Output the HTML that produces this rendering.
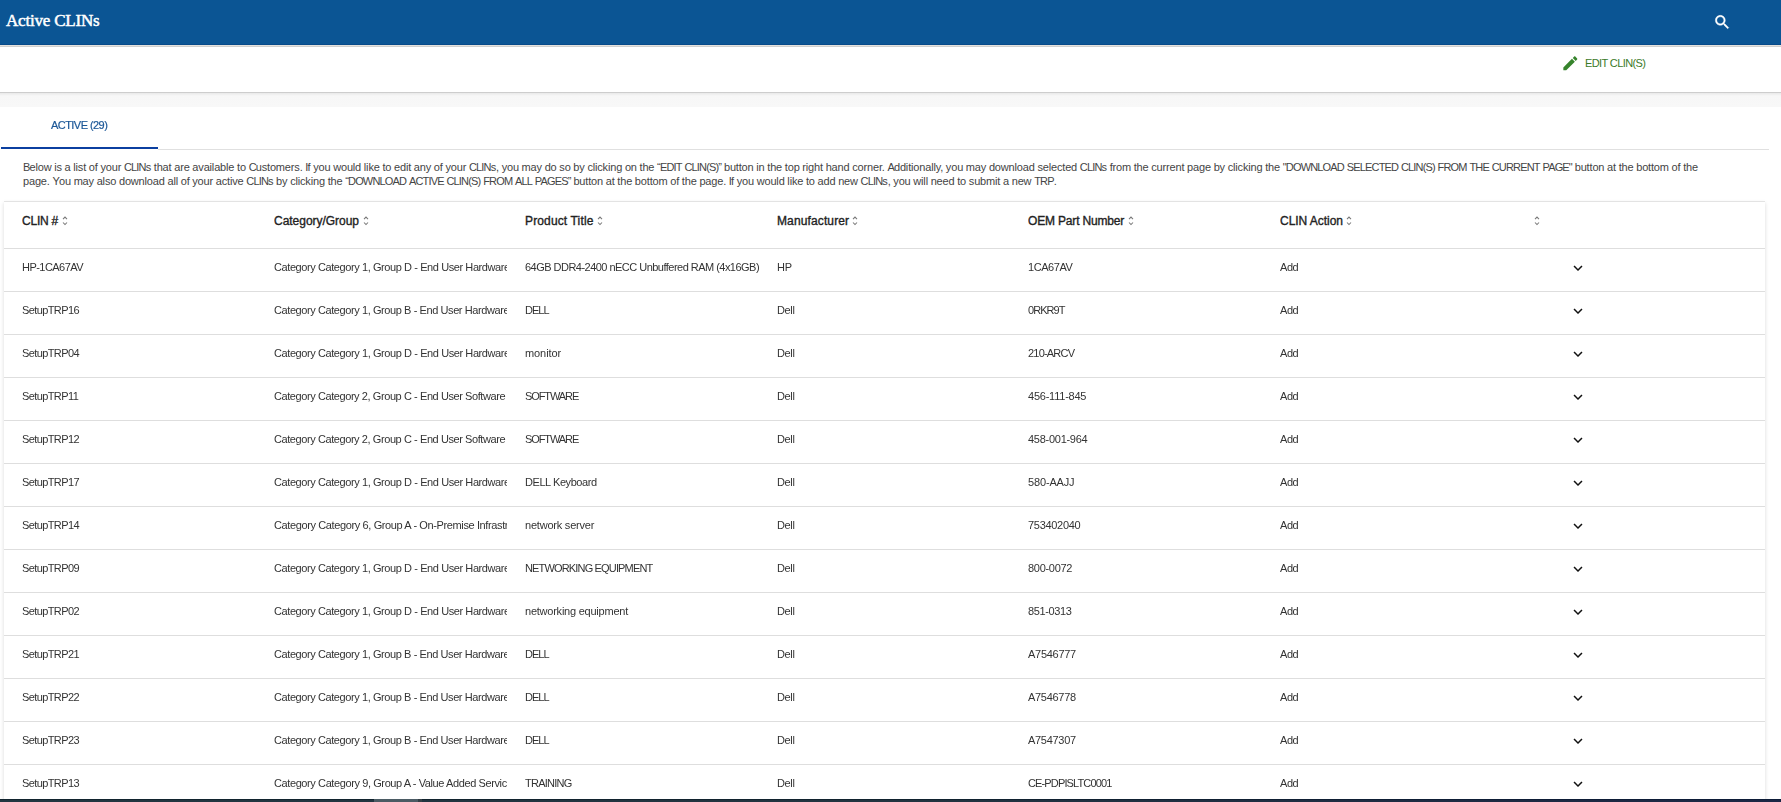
<!DOCTYPE html>
<html><head><meta charset="utf-8">
<style>
*{box-sizing:border-box;margin:0;padding:0}
html,body{width:1781px;height:802px;overflow:hidden;background:#fff;font-family:"Liberation Sans",sans-serif;color:#333}
.hdr{position:absolute;left:0;top:0;width:1781px;height:45px;background:#0b5594;border-bottom:1px solid #074a8a}
.title{position:absolute;left:6px;top:11px;font-family:"Liberation Serif",serif;font-size:17px;line-height:20px;color:#fff;-webkit-text-stroke:0.5px #fff;letter-spacing:-0.2px}
.search{position:absolute;left:1712.6px;top:13.1px;width:18.5px;height:18.5px}
.sh1{position:absolute;left:0;top:45px;width:1781px;height:1px;background:#e4e2de}
.sh2{position:absolute;left:0;top:46px;width:1781px;height:1px;background:#cfcfcf}
.bar2{position:absolute;left:0;top:92px;width:1781px;height:1px;background:#cdcdcd}
.bar3{position:absolute;left:0;top:93px;width:1781px;height:14px;background:linear-gradient(#e9e9e9,#f7f7f7 3px,#f8f8f8)}
.edit{position:absolute;left:1560.7px;top:53.7px;width:18.7px;height:18.7px}
.edittxt{position:absolute;left:1585px;top:56px;font-size:11px;line-height:14px;color:#3b7a28;letter-spacing:-0.609px}
.tab{position:absolute;left:51px;top:118px;font-size:11px;line-height:14px;color:#1b5797;-webkit-text-stroke:0.2px #1b5797;will-change:transform;letter-spacing:-0.55px}
.tabul{position:absolute;left:1px;top:147px;width:157px;height:2px;background:#0b3fa0}
.tabline{position:absolute;left:158px;top:149px;width:1611px;height:1px;background:#e0e0e0}
.desc{position:absolute;left:23px;top:160px;font-size:11px;line-height:14px;color:#444;letter-spacing:-0.168px;word-spacing:-0.13px;white-space:nowrap}
.desc i{font-style:normal;letter-spacing:-0.83px}
.card{position:absolute;left:4px;top:201px;width:1761px;height:600px;background:#fff;border-top:1px solid #e3e3e3;box-shadow:0 2px 4px rgba(0,0,0,0.15)}
.row{position:absolute;left:0;width:1761px;height:43px;border-bottom:1px solid #dedede}
.tr{will-change:transform}
.cell{position:absolute;top:-3px;height:42px;line-height:42px;overflow:hidden;white-space:nowrap;font-size:11px;color:#333}
.th .cell{top:0;font-size:12px;color:#222;height:46px;line-height:38px}
.th .cell span{-webkit-text-stroke:0.35px #222}
.sort{display:inline-block;width:6px;height:10px;margin-left:4px;vertical-align:middle;position:relative;top:-1px}
.chev{position:absolute;left:1565px;top:9.7px;width:18px;height:18px}
.sbar{position:absolute;left:0;top:799px;width:1781px;height:3px;background:linear-gradient(90deg,#223641,#213440 50%,#1d2a43 85%,#1b2745)}
.sbar1{position:absolute;left:0;top:799px;width:1781px;height:1px;background:linear-gradient(90deg,#12242e,#11222e 50%,#0e1d36 85%,#0d1c38)}
.thumb{position:absolute;left:374px;top:799px;width:44px;height:3px;background:#4b5b64}
.thumb2{position:absolute;left:418px;top:799px;width:4px;height:3px;background:#343f46}
</style></head><body>
<div class="hdr"><div class="title">Active CLINs</div>
<svg class="search" viewBox="0 0 24 24"><path fill="#fff" stroke="#fff" stroke-width="0.45" d="M15.5 14h-.79l-.28-.27C15.41 12.59 16 11.11 16 9.5 16 5.910 13.09 3 9.5 3S3 5.91 3 9.5 5.91 16 9.5 16c1.61 0 3.09-.59 4.23-1.57l.27.28v.79l5 4.99L20.49 19l-4.99-5zm-6 0C7.01 14 5 11.99 5 9.5S7.01 5 9.5 5 14 7.01 14 9.5 11.99 14 9.5 14z"/></svg>
</div>
<div class="sh1"></div><div class="sh2"></div>
<svg class="edit" viewBox="0 0 24 24"><path fill="#36842c" d="M3 17.25V21h3.75L17.81 9.94l-3.75-3.75L3 17.25zM20.71 7.04c.39-.39.39-1.02 0-1.41l-2.34-2.34c-.39-.39-1.02-.39-1.41 0l-1.83 1.83 3.75 3.75 1.83-1.83z"/></svg>
<div class="edittxt">EDIT CLIN(S)</div>
<div class="bar2"></div><div class="bar3"></div>
<div class="tab">ACTIVE (29)</div>
<div class="tabul"></div><div class="tabline"></div>
<div class="desc"><i class="u">B</i>elow is a list of your <i class="u">CLIN</i>s that are available to <i class="u">C</i>ustomers. <i class="u">I</i>f you would like to edit any of your <i class="u">CLIN</i>s, you may do so by clicking on the <i class="u">“EDIT</i> <i class="u">CLIN(S)”</i> button in the top right hand corner. <i class="u">A</i>dditionally, you may download selected <i class="u">CLIN</i>s from the current page by clicking the <i class="u">"DOWNLOAD</i> <i class="u">SELECTED</i> <i class="u">CLIN(S)</i> <i class="u">FROM</i> <i class="u">THE</i> <i class="u">CURRENT</i> <i class="u">PAGE"</i> button at the bottom of the<br>page. <i class="u">Y</i>ou may also download all of your active <i class="u">CLIN</i>s by clicking the <i class="u">“DOWNLOAD</i> <i class="u">ACTIVE</i> <i class="u">CLIN(S)</i> <i class="u">FROM</i> <i class="u">ALL</i> <i class="u">PAGES”</i> button at the bottom of the page. <i class="u">I</i>f you would like to add new <i class="u">CLIN</i>s, you will need to submit a new <i class="u">TRP</i>.</div>
<div class="card">
<div class="row th" style="top:0;height:47px">
<div class="cell" style="left:18px;width:233px"><span style="letter-spacing:-0.21px">CLIN #</span><svg class="sort" style="margin-left:4.2px" viewBox="0 0 6 10"><path d="M1 3.2L3 1.1 5 3.2M1 6.5L3 8.6 5 6.5" fill="none" stroke="#777" stroke-width="1.05"/></svg></div>
<div class="cell" style="left:270px;width:233px"><span style="letter-spacing:-0.027px">Category/Group</span><svg class="sort" style="margin-left:3.5px" viewBox="0 0 6 10"><path d="M1 3.2L3 1.1 5 3.2M1 6.5L3 8.6 5 6.5" fill="none" stroke="#777" stroke-width="1.05"/></svg></div>
<div class="cell" style="left:521px;width:234px"><span style="letter-spacing:0.138px">Product Title</span><svg class="sort" style="margin-left:3.7px" viewBox="0 0 6 10"><path d="M1 3.2L3 1.1 5 3.2M1 6.5L3 8.6 5 6.5" fill="none" stroke="#777" stroke-width="1.05"/></svg></div>
<div class="cell" style="left:773px;width:233px"><span style="letter-spacing:0.123px">Manufacturer</span><svg class="sort" style="margin-left:3.1px" viewBox="0 0 6 10"><path d="M1 3.2L3 1.1 5 3.2M1 6.5L3 8.6 5 6.5" fill="none" stroke="#777" stroke-width="1.05"/></svg></div>
<div class="cell" style="left:1024px;width:233px"><span style="letter-spacing:-0.17px">OEM Part Number</span><svg class="sort" style="margin-left:4.3px" viewBox="0 0 6 10"><path d="M1 3.2L3 1.1 5 3.2M1 6.5L3 8.6 5 6.5" fill="none" stroke="#777" stroke-width="1.05"/></svg></div>
<div class="cell" style="left:1276px;width:233px"><span style="letter-spacing:-0.035px">CLIN Action</span><svg class="sort" style="margin-left:3.5px" viewBox="0 0 6 10"><path d="M1 3.2L3 1.1 5 3.2M1 6.5L3 8.6 5 6.5" fill="none" stroke="#777" stroke-width="1.05"/></svg></div>
<div class="cell" style="left:1529px;width:233px"><span style="letter-spacing:0px"></span><svg class="sort" style="margin-left:1.3px" viewBox="0 0 6 10"><path d="M1 3.2L3 1.1 5 3.2M1 6.5L3 8.6 5 6.5" fill="none" stroke="#777" stroke-width="1.05"/></svg></div>
</div>
<div class="row tr" style="top:47px">
<div class="cell" style="left:18px;width:233px;letter-spacing:-0.544px">HP-1CA67AV</div>
<div class="cell" style="left:270px;width:233px;letter-spacing:-0.413px">Category Category 1, Group D - End User Hardware</div>
<div class="cell" style="left:521px;width:234px;letter-spacing:-0.524px">64GB DDR4-2400 nECC Unbuffered RAM (4x16GB)</div>
<div class="cell" style="left:773px;width:233px;letter-spacing:-0.1px">HP</div>
<div class="cell" style="left:1024px;width:233px;letter-spacing:-0.45px">1CA67AV</div>
<div class="cell" style="left:1276px;width:233px;letter-spacing:-0.45px">Add</div>
<svg class="chev" viewBox="0 0 24 24"><path fill="#111" d="M16.59 8.59L12 13.17 7.41 8.59 6 10l6 6 6-6z"/></svg>
</div>
<div class="row tr" style="top:90px">
<div class="cell" style="left:18px;width:233px;letter-spacing:-0.6px">SetupTRP16</div>
<div class="cell" style="left:270px;width:233px;letter-spacing:-0.413px">Category Category 1, Group B - End User Hardware</div>
<div class="cell" style="left:521px;width:234px;letter-spacing:-1.0px">DELL</div>
<div class="cell" style="left:773px;width:233px;letter-spacing:-0.367px">Dell</div>
<div class="cell" style="left:1024px;width:233px;letter-spacing:-0.94px">0RKR9T</div>
<div class="cell" style="left:1276px;width:233px;letter-spacing:-0.45px">Add</div>
<svg class="chev" viewBox="0 0 24 24"><path fill="#111" d="M16.59 8.59L12 13.17 7.41 8.59 6 10l6 6 6-6z"/></svg>
</div>
<div class="row tr" style="top:133px">
<div class="cell" style="left:18px;width:233px;letter-spacing:-0.6px">SetupTRP04</div>
<div class="cell" style="left:270px;width:233px;letter-spacing:-0.413px">Category Category 1, Group D - End User Hardware</div>
<div class="cell" style="left:521px;width:234px;letter-spacing:-0.083px">monitor</div>
<div class="cell" style="left:773px;width:233px;letter-spacing:-0.367px">Dell</div>
<div class="cell" style="left:1024px;width:233px;letter-spacing:-0.8px">210-ARCV</div>
<div class="cell" style="left:1276px;width:233px;letter-spacing:-0.45px">Add</div>
<svg class="chev" viewBox="0 0 24 24"><path fill="#111" d="M16.59 8.59L12 13.17 7.41 8.59 6 10l6 6 6-6z"/></svg>
</div>
<div class="row tr" style="top:176px">
<div class="cell" style="left:18px;width:233px;letter-spacing:-0.6px">SetupTRP11</div>
<div class="cell" style="left:270px;width:233px;letter-spacing:-0.419px">Category Category 2, Group C - End User Software</div>
<div class="cell" style="left:521px;width:234px;letter-spacing:-1.1px">SOFTWARE</div>
<div class="cell" style="left:773px;width:233px;letter-spacing:-0.367px">Dell</div>
<div class="cell" style="left:1024px;width:233px;letter-spacing:-0.23px">456-111-845</div>
<div class="cell" style="left:1276px;width:233px;letter-spacing:-0.45px">Add</div>
<svg class="chev" viewBox="0 0 24 24"><path fill="#111" d="M16.59 8.59L12 13.17 7.41 8.59 6 10l6 6 6-6z"/></svg>
</div>
<div class="row tr" style="top:219px">
<div class="cell" style="left:18px;width:233px;letter-spacing:-0.6px">SetupTRP12</div>
<div class="cell" style="left:270px;width:233px;letter-spacing:-0.419px">Category Category 2, Group C - End User Software</div>
<div class="cell" style="left:521px;width:234px;letter-spacing:-1.1px">SOFTWARE</div>
<div class="cell" style="left:773px;width:233px;letter-spacing:-0.367px">Dell</div>
<div class="cell" style="left:1024px;width:233px;letter-spacing:-0.27px">458-001-964</div>
<div class="cell" style="left:1276px;width:233px;letter-spacing:-0.45px">Add</div>
<svg class="chev" viewBox="0 0 24 24"><path fill="#111" d="M16.59 8.59L12 13.17 7.41 8.59 6 10l6 6 6-6z"/></svg>
</div>
<div class="row tr" style="top:262px">
<div class="cell" style="left:18px;width:233px;letter-spacing:-0.6px">SetupTRP17</div>
<div class="cell" style="left:270px;width:233px;letter-spacing:-0.413px">Category Category 1, Group D - End User Hardware</div>
<div class="cell" style="left:521px;width:234px;letter-spacing:-0.433px">DELL Keyboard</div>
<div class="cell" style="left:773px;width:233px;letter-spacing:-0.367px">Dell</div>
<div class="cell" style="left:1024px;width:233px;letter-spacing:-0.157px">580-AAJJ</div>
<div class="cell" style="left:1276px;width:233px;letter-spacing:-0.45px">Add</div>
<svg class="chev" viewBox="0 0 24 24"><path fill="#111" d="M16.59 8.59L12 13.17 7.41 8.59 6 10l6 6 6-6z"/></svg>
</div>
<div class="row tr" style="top:305px">
<div class="cell" style="left:18px;width:233px;letter-spacing:-0.6px">SetupTRP14</div>
<div class="cell" style="left:270px;width:233px;letter-spacing:-0.38px">Category Category 6, Group A - On-Premise Infrastructure</div>
<div class="cell" style="left:521px;width:234px;letter-spacing:-0.215px">network server</div>
<div class="cell" style="left:773px;width:233px;letter-spacing:-0.367px">Dell</div>
<div class="cell" style="left:1024px;width:233px;letter-spacing:-0.3px">753402040</div>
<div class="cell" style="left:1276px;width:233px;letter-spacing:-0.45px">Add</div>
<svg class="chev" viewBox="0 0 24 24"><path fill="#111" d="M16.59 8.59L12 13.17 7.41 8.59 6 10l6 6 6-6z"/></svg>
</div>
<div class="row tr" style="top:348px">
<div class="cell" style="left:18px;width:233px;letter-spacing:-0.6px">SetupTRP09</div>
<div class="cell" style="left:270px;width:233px;letter-spacing:-0.413px">Category Category 1, Group D - End User Hardware</div>
<div class="cell" style="left:521px;width:234px;letter-spacing:-0.842px">NETWORKING EQUIPMENT</div>
<div class="cell" style="left:773px;width:233px;letter-spacing:-0.367px">Dell</div>
<div class="cell" style="left:1024px;width:233px;letter-spacing:-0.286px">800-0072</div>
<div class="cell" style="left:1276px;width:233px;letter-spacing:-0.45px">Add</div>
<svg class="chev" viewBox="0 0 24 24"><path fill="#111" d="M16.59 8.59L12 13.17 7.41 8.59 6 10l6 6 6-6z"/></svg>
</div>
<div class="row tr" style="top:391px">
<div class="cell" style="left:18px;width:233px;letter-spacing:-0.6px">SetupTRP02</div>
<div class="cell" style="left:270px;width:233px;letter-spacing:-0.413px">Category Category 1, Group D - End User Hardware</div>
<div class="cell" style="left:521px;width:234px;letter-spacing:-0.232px">networking equipment</div>
<div class="cell" style="left:773px;width:233px;letter-spacing:-0.367px">Dell</div>
<div class="cell" style="left:1024px;width:233px;letter-spacing:-0.371px">851-0313</div>
<div class="cell" style="left:1276px;width:233px;letter-spacing:-0.45px">Add</div>
<svg class="chev" viewBox="0 0 24 24"><path fill="#111" d="M16.59 8.59L12 13.17 7.41 8.59 6 10l6 6 6-6z"/></svg>
</div>
<div class="row tr" style="top:434px">
<div class="cell" style="left:18px;width:233px;letter-spacing:-0.6px">SetupTRP21</div>
<div class="cell" style="left:270px;width:233px;letter-spacing:-0.413px">Category Category 1, Group B - End User Hardware</div>
<div class="cell" style="left:521px;width:234px;letter-spacing:-1.0px">DELL</div>
<div class="cell" style="left:773px;width:233px;letter-spacing:-0.367px">Dell</div>
<div class="cell" style="left:1024px;width:233px;letter-spacing:-0.286px">A7546777</div>
<div class="cell" style="left:1276px;width:233px;letter-spacing:-0.45px">Add</div>
<svg class="chev" viewBox="0 0 24 24"><path fill="#111" d="M16.59 8.59L12 13.17 7.41 8.59 6 10l6 6 6-6z"/></svg>
</div>
<div class="row tr" style="top:477px">
<div class="cell" style="left:18px;width:233px;letter-spacing:-0.6px">SetupTRP22</div>
<div class="cell" style="left:270px;width:233px;letter-spacing:-0.413px">Category Category 1, Group B - End User Hardware</div>
<div class="cell" style="left:521px;width:234px;letter-spacing:-1.0px">DELL</div>
<div class="cell" style="left:773px;width:233px;letter-spacing:-0.367px">Dell</div>
<div class="cell" style="left:1024px;width:233px;letter-spacing:-0.295px">A7546778</div>
<div class="cell" style="left:1276px;width:233px;letter-spacing:-0.45px">Add</div>
<svg class="chev" viewBox="0 0 24 24"><path fill="#111" d="M16.59 8.59L12 13.17 7.41 8.59 6 10l6 6 6-6z"/></svg>
</div>
<div class="row tr" style="top:520px">
<div class="cell" style="left:18px;width:233px;letter-spacing:-0.6px">SetupTRP23</div>
<div class="cell" style="left:270px;width:233px;letter-spacing:-0.413px">Category Category 1, Group B - End User Hardware</div>
<div class="cell" style="left:521px;width:234px;letter-spacing:-1.0px">DELL</div>
<div class="cell" style="left:773px;width:233px;letter-spacing:-0.367px">Dell</div>
<div class="cell" style="left:1024px;width:233px;letter-spacing:-0.295px">A7547307</div>
<div class="cell" style="left:1276px;width:233px;letter-spacing:-0.45px">Add</div>
<svg class="chev" viewBox="0 0 24 24"><path fill="#111" d="M16.59 8.59L12 13.17 7.41 8.59 6 10l6 6 6-6z"/></svg>
</div>
<div class="row tr" style="top:563px">
<div class="cell" style="left:18px;width:233px;letter-spacing:-0.6px">SetupTRP13</div>
<div class="cell" style="left:270px;width:233px;letter-spacing:-0.4px">Category Category 9, Group A - Value Added Services</div>
<div class="cell" style="left:521px;width:234px;letter-spacing:-0.743px">TRAINING</div>
<div class="cell" style="left:773px;width:233px;letter-spacing:-0.367px">Dell</div>
<div class="cell" style="left:1024px;width:233px;letter-spacing:-0.864px">CE-PDPISLTC0001</div>
<div class="cell" style="left:1276px;width:233px;letter-spacing:-0.45px">Add</div>
<svg class="chev" viewBox="0 0 24 24"><path fill="#111" d="M16.59 8.59L12 13.17 7.41 8.59 6 10l6 6 6-6z"/></svg>
</div>
</div>
<div class="sbar"></div><div class="sbar1"></div><div class="thumb"></div><div class="thumb2"></div>
</body></html>
